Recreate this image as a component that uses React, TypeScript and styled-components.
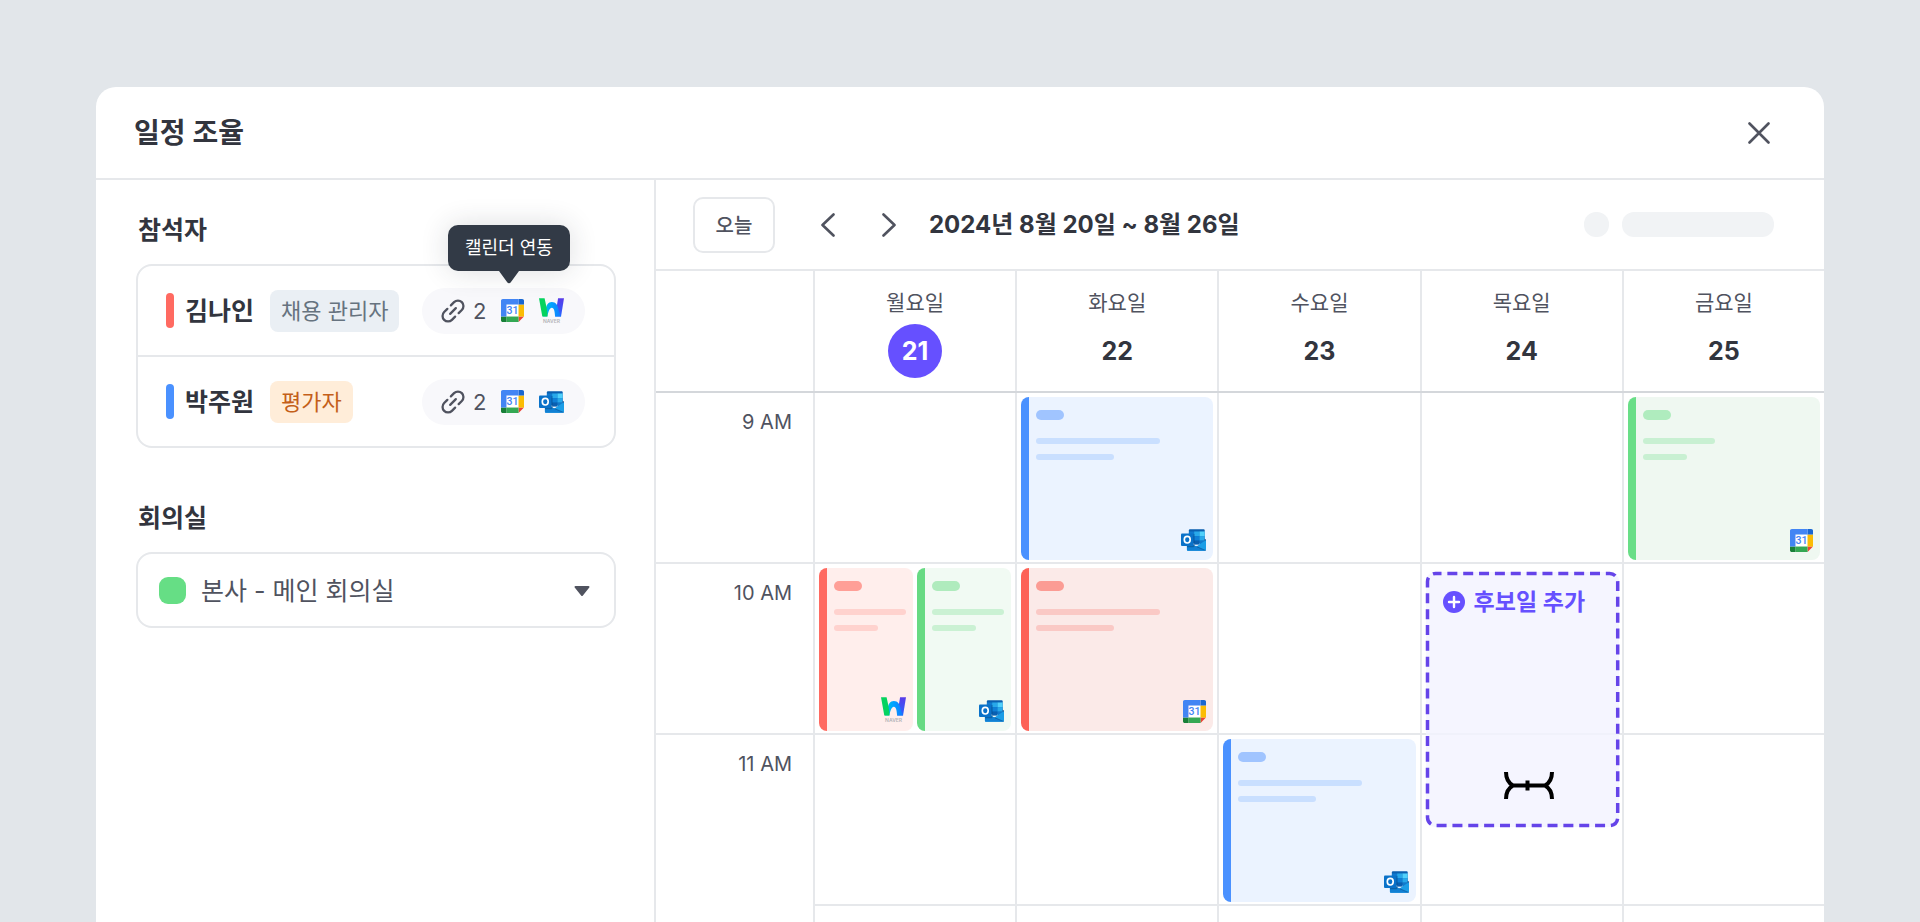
import React from "react";
import styled, { createGlobalStyle } from "styled-components";

const color = {
  page: "#e2e6ea",
  line: "#e6e8eb",
  lineStrong: "#d4d7db",
  ink: "#32353e",
  inkSoft: "#50535f",
  accent: "#6650ff",
  dash: "#6544e9",
};

const GlobalStyle = createGlobalStyle`
  *, *::before, *::after { box-sizing: border-box; }
  body {
    margin: 0;
    background: ${color.page};
    color: ${color.ink};
    font-family: Inter, "Noto Sans CJK KR", sans-serif;
  }
  h1, h2, p, ul { margin: 0; padding: 0; }
  button, select { font: inherit; color: inherit; }
  button { cursor: pointer; }
`;

const Page = styled.div`
  min-height: 100vh;
  padding: 87px 5% 0;
  display: flex;
`;

const Modal = styled.main`
  flex: 1;
  min-width: 0;
  display: flex;
  flex-direction: column;
  background: #fff;
  border-radius: 20px 20px 0 0;
`;

const ModalHeader = styled.header`
  height: 93px;
  padding: 0 50px 0 38px;
  display: flex;
  align-items: center;
  justify-content: space-between;
  border-bottom: 2px solid ${color.line};
`;

const Title = styled.h1`
  font-size: 28px;
  line-height: 40px;
  font-weight: 600;
`;

const IconButton = styled.button`
  padding: 4px;
  border: 0;
  background: none;
  display: flex;
  color: ${color.inkSoft};
`;

const ModalBody = styled.div`
  flex: 1;
  display: flex;
`;

const Sidebar = styled.aside`
  width: 560px;
  flex: none;
  padding: 32px 38px 0 40px;
  border-right: 2px solid ${color.line};
`;

const headingText = `
  display: block;
  padding-left: 2px;
  font-size: 25px;
  line-height: 36px;
  font-weight: 600;
`;

const SectionTitle = styled.h2`
  ${headingText}
`;

const FieldLabel = styled.label`
  ${headingText}
  margin-top: 52px;
`;

const People = styled.ul`
  margin-top: 16px;
  list-style: none;
  border: 2px solid ${color.line};
  border-radius: 16px;
`;

const Person = styled.li`
  height: 89px;
  padding: 0 29px 0 28px;
  display: flex;
  align-items: center;
  & + & {
    height: 91px;
    border-top: 2px solid ${color.line};
  }
`;

const PersonBar = styled.span<{ $fill: string }>`
  width: 8px;
  height: 35px;
  border-radius: 4px;
  background: ${(p) => p.$fill};
`;

const PersonName = styled.span`
  margin: 0 16px 0 11px;
  font-size: 25px;
  line-height: 36px;
  font-weight: 600;
`;

const RoleTag = styled.span<{ $bg: string; $fg: string }>`
  padding: 0 11px;
  border-radius: 8px;
  font-size: 22px;
  line-height: 42px;
  background: ${(p) => p.$bg};
  color: ${(p) => p.$fg};
`;

const LinkedCalendars = styled.div`
  position: relative;
  width: 163px;
  height: 46px;
  margin-left: auto;
  padding: 0 21px 0 19px;
  display: flex;
  align-items: center;
  justify-content: space-between;
  border-radius: 23px;
  background: #f8f8fb;
`;

const LinkCount = styled.span`
  display: flex;
  align-items: center;
  gap: 8px;
  font-size: 22px;
  line-height: 32px;
  color: ${color.inkSoft};
`;

const Tooltip = styled.div`
  position: absolute;
  left: 26px;
  bottom: calc(100% + 17px);
  padding: 0 17px;
  border-radius: 10px;
  background: #323a46;
  color: #fff;
  font-size: 18px;
  line-height: 46px;
  white-space: nowrap;
  box-shadow: 0 0 28px rgba(40, 45, 55, 0.16);
`;

const TooltipArrow = styled.svg`
  position: absolute;
  top: 100%;
  left: calc(50% - 10px);
  display: block;
`;

const SelectBox = styled.div`
  position: relative;
  margin-top: 16px;
`;

const Select = styled.select`
  width: 100%;
  height: 76px;
  padding: 2px 60px 0 63px;
  appearance: none;
  border: 2px solid ${color.line};
  border-radius: 16px;
  background: #fff;
  color: ${color.inkSoft};
  font-size: 25px;
`;

const RoomSwatch = styled.span`
  position: absolute;
  left: 23px;
  top: 25px;
  width: 27px;
  height: 27px;
  border-radius: 9px;
  background: #66de85;
  pointer-events: none;
`;

const SelectArrow = styled.svg`
  position: absolute;
  right: 26px;
  top: 34px;
  pointer-events: none;
`;

const Calendar = styled.section`
  flex: 1;
  min-width: 0;
  display: flex;
  flex-direction: column;
`;

const Toolbar = styled.div`
  height: 91px;
  padding: 0 50px 0 37px;
  display: flex;
  align-items: center;
  border-bottom: 2px solid ${color.line};
`;

const TodayButton = styled.button`
  width: 82px;
  height: 56px;
  padding: 0;
  border: 2px solid ${color.line};
  border-radius: 10px;
  background: #fff;
  font-size: 20px;
  font-weight: 500;
  color: ${color.inkSoft};
`;

const WeekNav = styled.div`
  margin: 0 28px 0 41px;
  display: flex;
  gap: 37px;
`;

const Period = styled.h2`
  font-size: 24px;
  line-height: 36px;
  font-weight: 700;
`;

const Placeholders = styled.div`
  margin-left: auto;
  display: flex;
  gap: 13px;
`;

const Placeholder = styled.span<{ $width: number }>`
  width: ${(p) => p.$width}px;
  height: 25px;
  border-radius: 12px;
  background: #f1f3f5;
`;

const columns = "157px repeat(5, minmax(0, 1fr))";

const WeekHeader = styled.div`
  height: 122px;
  display: grid;
  grid-template-columns: ${columns};
  border-bottom: 2px solid ${color.lineStrong};
`;

const DayHeader = styled.div`
  padding-top: 20px;
  display: flex;
  flex-direction: column;
  align-items: center;
  gap: 9px;
  border-left: 2px solid ${color.line};
`;

const DayName = styled.span`
  font-size: 21px;
  line-height: 24px;
  color: ${color.inkSoft};
`;

const DayNumber = styled.span<{ $today: boolean }>`
  width: 54px;
  border-radius: 27px;
  text-align: center;
  font-size: 25px;
  line-height: 54px;
  font-weight: 700;
  background: ${(p) => (p.$today ? color.accent : "transparent")};
  color: ${(p) => (p.$today ? "#fff" : color.ink)};
`;

const WeekGrid = styled.div`
  flex: 1;
  display: grid;
  grid-template-columns: ${columns};
  grid-template-rows: repeat(3, 171px) minmax(16px, 1fr);
`;

const HourLabel = styled.div<{ $row: number; $ruled: boolean }>`
  grid-column: 1;
  grid-row: ${(p) => p.$row};
  padding: 17px 21px 0 0;
  text-align: right;
  font-size: 20px;
  line-height: 24px;
  color: ${color.inkSoft};
  border-bottom: ${(p) => (p.$ruled ? `2px solid ${color.line}` : "0")};
`;

const Cell = styled.div<{ $col: number; $row: number }>`
  grid-column: ${(p) => p.$col};
  grid-row: ${(p) => p.$row};
  border-left: 2px solid ${color.line};
  border-bottom: ${(p) => (p.$row < 4 ? `2px solid ${color.line}` : "0")};
`;

const Slot = styled.div<{ $col: number; $row: number }>`
  grid-column: ${(p) => p.$col};
  grid-row: ${(p) => p.$row};
  margin: 4px 4px 4px 6px;
  display: flex;
  gap: 4px;
`;

type Tone = "blue" | "red" | "rose" | "green" | "mint";

const tones: Record<Tone, { bar: string; bg: string; pill: string; line: string }> = {
  blue: { bar: "#4a91ff", bg: "#ebf3ff", pill: "#a0c4ff", line: "#c9dfff" },
  red: { bar: "#fd6156", bg: "#fbeae8", pill: "#fb9c94", line: "#fac9c5" },
  rose: { bar: "#ff6a61", bg: "#ffeeec", pill: "#ff9f97", line: "#ffd2ce" },
  green: { bar: "#69de87", bg: "#eff8f1", pill: "#afecbe", line: "#c8f0d2" },
  mint: { bar: "#67da83", bg: "#f1faf3", pill: "#afebbd", line: "#caf1d3" },
};

const EventCard = styled.article<{ $tone: Tone }>`
  flex: 1;
  min-width: 0;
  height: 163px;
  padding: 13px 7px 8px;
  display: flex;
  flex-direction: column;
  border-left: 8px solid ${(p) => tones[p.$tone].bar};
  border-radius: 8px;
  background: ${(p) => tones[p.$tone].bg};
`;

const EventPill = styled.span<{ $tone: Tone }>`
  width: 28px;
  height: 10px;
  margin-bottom: 18px;
  border-radius: 5px;
  background: ${(p) => tones[p.$tone].pill};
`;

const EventLine = styled.span<{ $tone: Tone; $width: number }>`
  width: ${(p) => p.$width}px;
  height: 6px;
  margin-bottom: 10px;
  border-radius: 3px;
  background: ${(p) => tones[p.$tone].line};
`;

const EventSource = styled.span`
  margin-top: auto;
  align-self: flex-end;
  min-height: 23px;
  display: flex;
  align-items: flex-start;
`;

const Candidate = styled.button`
  position: relative;
  grid-column: 5;
  grid-row: 2 / span 2;
  height: 255px;
  margin: 8px 3px 0 6px;
  padding: 14px 0 0 17px;
  display: flex;
  align-items: flex-start;
  gap: 9px;
  border: 0;
  border-radius: 9px;
  background: rgba(243, 242, 255, 0.8);
  color: ${color.accent};
  font-size: 23px;
  line-height: 32px;
  font-weight: 600;
  text-align: left;
`;

const CandidateIcon = styled.svg`
  flex: none;
  margin-top: 5px;
`;

const DashedFrame = styled.svg`
  position: absolute;
  inset: 0;
  width: 100%;
  height: 100%;
  overflow: visible;
  rect {
    width: calc(100% - 3px);
    height: calc(100% - 3px);
  }
`;

const ResizeCursor = styled.svg`
  position: absolute;
  left: 78px;
  bottom: 28px;
`;

const NaverMark = styled.span`
  width: 25px;
  display: flex;
  flex-direction: column;
  align-items: center;
  gap: 2px;
  font-size: 5px;
  line-height: 5px;
  font-weight: 600;
  color: #b4b4b8;
`;

const GoogleCalendarIcon = () => (
  <svg width="23" height="23" viewBox="0 0 200 200" role="img" aria-label="Google Calendar">
    <path d="M152.6 47.4H47.4v105.2h105.2z" fill="#fff" />
    <path d="M152.6 200 200 152.6h-47.4z" fill="#ea4335" />
    <path d="M200 47.4h-47.4v105.2H200z" fill="#fbbc04" />
    <path d="M152.6 152.6H47.4V200h105.2z" fill="#34a853" />
    <path d="M0 152.6v31.6C0 193 7 200 15.8 200h31.6v-47.4z" fill="#188038" />
    <path d="M200 47.4V15.8C200 7 193 0 184.2 0h-31.6v47.4z" fill="#1967d2" />
    <path d="M15.8 0C7 0 0 7 0 15.8v136.800h47.400V47.400h105.200V0z" fill="#4285f4" />
    <text x="100" y="133" textAnchor="middle" fontFamily="Roboto, sans-serif" fontSize="92" fontWeight="500" fill="#4285f4">
      31
    </text>
  </svg>
);

const OutlookIcon = () => (
  <svg width="25" height="22" viewBox="0 0 76 66" role="img" aria-label="Outlook">
    <path d="M27 0h42a3 3 0 0 1 3 3v40H24V3a3 3 0 0 1 3-3z" fill="#0a5fb0" />
    <path d="M24 7h16v14H24z" fill="#1079cf" />
    <path d="M40 7h16v14H40z" fill="#28a8ea" />
    <path d="M56 7h16v14H56z" fill="#50d0fb" />
    <path d="M40 21h16v14H40z" fill="#0f7fd6" />
    <path d="M56 21h16v14H56z" fill="#28a8ea" />
    <path d="M40 35h16v12H40z" fill="#0a5fb0" />
    <path d="M56 35h16v12H56z" fill="#1279cb" />
    <path d="M72 29l4 3v8l-12 6 8-10z" fill="#0a3a7c" />
    <path d="M76 33v30a3 3 0 0 1-3 3H21a3 3 0 0 1-3-3V38l29 15z" fill="#1b9de6" />
    <path d="M18 50l20-1 9 4 27 12.500a3 3 0 0 1-1 .5H21a3 3 0 0 1-3-3z" fill="#1180d3" />
    <path d="M47 53l28 12" stroke="#0a4f96" strokeWidth="2" fill="none" />
    <path d="M38 15h3v36a4 4 0 0 1-4 4H18v-4z" fill="#06467f" opacity=".5" />
    <rect y="13" width="38" height="38" rx="3" fill="#0a72c9" />
    <ellipse cx="19" cy="32" rx="9" ry="10" fill="none" stroke="#fff" strokeWidth="5" />
  </svg>
);

const NaverWorksIcon = () => (
  <NaverMark>
    <svg width="25" height="19" viewBox="0 0 76 57" role="img" aria-label="NAVER WORKS">
      <defs>
        <linearGradient id="arch" x1="0" x2="1" y1="0" y2="0">
          <stop offset="0" stopColor="#00c8d8" />
          <stop offset=".45" stopColor="#00a4ff" />
          <stop offset="1" stopColor="#1478ff" />
        </linearGradient>
        <linearGradient id="right" x1="0" x2="0" y1="0" y2="1">
          <stop offset="0" stopColor="#5a3be8" />
          <stop offset="1" stopColor="#2a64ff" />
        </linearGradient>
      </defs>
      <path d="M58 0h18l-9 56H49z" fill="url(#right)" />
      <path d="M20 38c1-16 8-26 19-26 12 0 19 10 21 26l7 18H49c-1-16-3-27-10-27s-10 11-14 27H12z" fill="url(#arch)" />
      <path d="M0 0h17l5 24c2 12 4 22 4 32H10z" fill="#05d35f" />
    </svg>
    NAVER
  </NaverMark>
);

const LinkIcon = () => (
  <svg width="24" height="24" viewBox="-12 -12 24 24" fill="none" stroke="currentColor" strokeWidth="2.300" strokeLinecap="round" aria-hidden="true">
    <g transform="rotate(-45)">
      <path d="M-2.500 5.500H-7A5.500 5.500 0 0 1-7-5.500H-2.500" />
      <path d="M2.500-5.500H7A5.500 5.500 0 0 1 7 5.500H2.500" />
      <path d="M-4 0H4" />
    </g>
  </svg>
);

type Source = "google" | "outlook" | "naver";

const SourceIcon = ({ source }: { source: Source }) => {
  if (source === "google") return <GoogleCalendarIcon />;
  if (source === "outlook") return <OutlookIcon />;
  return <NaverWorksIcon />;
};

const Chevron = ({ d }: { d: string }) => (
  <svg width="16" height="24" viewBox="0 0 16 24" fill="none" stroke="currentColor" strokeWidth="2.600" strokeLinecap="round" strokeLinejoin="round" aria-hidden="true">
    <path d={d} />
  </svg>
);

type EventData = { tone: Tone; source: Source; lines: [number, number] };

const CalendarEvent = ({ tone, source, lines }: EventData) => (
  <EventCard $tone={tone}>
    <EventPill $tone={tone} />
    {lines.map((width) => (
      <EventLine key={width} $tone={tone} $width={width} />
    ))}
    <EventSource>
      <SourceIcon source={source} />
    </EventSource>
  </EventCard>
);

const days = [
  { name: "월요일", date: 21 },
  { name: "화요일", date: 22 },
  { name: "수요일", date: 23 },
  { name: "목요일", date: 24 },
  { name: "금요일", date: 25 },
];

const hours = ["9 AM", "10 AM", "11 AM"];

const slots: { col: number; row: number; events: EventData[] }[] = [
  { col: 3, row: 1, events: [{ tone: "blue", source: "outlook", lines: [124, 78] }] },
  { col: 6, row: 1, events: [{ tone: "green", source: "google", lines: [72, 44] }] },
  {
    col: 2,
    row: 2,
    events: [
      { tone: "rose", source: "naver", lines: [72, 44] },
      { tone: "mint", source: "outlook", lines: [72, 44] },
    ],
  },
  { col: 3, row: 2, events: [{ tone: "red", source: "google", lines: [124, 78] }] },
  { col: 4, row: 3, events: [{ tone: "blue", source: "outlook", lines: [124, 78] }] },
];

const people: { name: string; role: string; bar: string; bg: string; fg: string; sources: Source[]; tip?: string }[] = [
  { name: "김나인", role: "채용 관리자", bar: "#ff6a61", bg: "#eaeff4", fg: "#66737f", sources: ["google", "naver"], tip: "캘린더 연동" },
  { name: "박주원", role: "평가자", bar: "#4a91ff", bg: "#ffedd9", fg: "#c45f1a", sources: ["google", "outlook"] },
];

export default function App() {
  return (
    <>
      <GlobalStyle />
      <Page>
        <Modal>
          <ModalHeader>
            <Title>일정 조율</Title>
            <IconButton type="button" aria-label="닫기">
              <svg width="22" height="22" viewBox="0 0 22 22" stroke="currentColor" strokeWidth="2.600" strokeLinecap="round" aria-hidden="true">
                <path d="M1.500 1.500l19 19M20.500 1.500l-19 19" />
              </svg>
            </IconButton>
          </ModalHeader>
          <ModalBody>
            <Sidebar>
              <SectionTitle>참석자</SectionTitle>
              <People>
                {people.map((person) => (
                  <Person key={person.name}>
                    <PersonBar $fill={person.bar} />
                    <PersonName>{person.name}</PersonName>
                    <RoleTag $bg={person.bg} $fg={person.fg}>
                      {person.role}
                    </RoleTag>
                    <LinkedCalendars>
                      <LinkCount>
                        <LinkIcon />
                        {person.sources.length}
                      </LinkCount>
                      {person.sources.map((source) => (
                        <SourceIcon key={source} source={source} />
                      ))}
                      {person.tip && (
                        <Tooltip role="tooltip">
                          {person.tip}
                          <TooltipArrow width="20" height="13" viewBox="0 0 20 13" aria-hidden="true">
                            <path d="M0 0h20l-8.200 11.200a2.200 2.200 0 0 1-3.600 0z" fill="#323a46" />
                          </TooltipArrow>
                        </Tooltip>
                      )}
                    </LinkedCalendars>
                  </Person>
                ))}
              </People>
              <FieldLabel htmlFor="room">회의실</FieldLabel>
              <SelectBox>
                <Select id="room" defaultValue="main">
                  <option value="main">본사 - 메인 회의실</option>
                </Select>
                <RoomSwatch />
                <SelectArrow width="16" height="10" viewBox="0 0 16 10" aria-hidden="true">
                  <path d="M1.500 0h13a1 1 0 0 1 .8 1.600L8.900 9.400a1.200 1.200 0 0 1-1.800 0L.7 1.600A1 1 0 0 1 1.500 0z" fill={color.inkSoft} />
                </SelectArrow>
              </SelectBox>
            </Sidebar>
            <Calendar>
              <Toolbar>
                <TodayButton type="button">오늘</TodayButton>
                <WeekNav>
                  <IconButton type="button" aria-label="이전 주">
                    <Chevron d="M13.500 1.500 2.500 12l11 10.500" />
                  </IconButton>
                  <IconButton type="button" aria-label="다음 주">
                    <Chevron d="M2.500 1.500 13.500 12l-11 10.500" />
                  </IconButton>
                </WeekNav>
                <Period>2024년 8월 20일 ~ 8월 26일</Period>
                <Placeholders>
                  <Placeholder $width={25} />
                  <Placeholder $width={152} />
                </Placeholders>
              </Toolbar>
              <WeekHeader>
                <span />
                {days.map((day) => (
                  <DayHeader key={day.date}>
                    <DayName>{day.name}</DayName>
                    <DayNumber $today={day.date === 21}>{day.date}</DayNumber>
                  </DayHeader>
                ))}
              </WeekHeader>
              <WeekGrid>
                {hours.map((hour, i) => (
                  <HourLabel key={hour} $row={i + 1} $ruled={i < 2}>
                    {hour}
                  </HourLabel>
                ))}
                {[1, 2, 3, 4].map((row) =>
                  days.map((day, i) => <Cell key={`${row}-${day.date}`} $col={i + 2} $row={row} />)
                )}
                {slots.map((slot) => (
                  <Slot key={`${slot.col}-${slot.row}`} $col={slot.col} $row={slot.row}>
                    {slot.events.map((event) => (
                      <CalendarEvent key={event.tone} {...event} />
                    ))}
                  </Slot>
                ))}
                <Candidate type="button">
                  <DashedFrame aria-hidden="true">
                    <rect x="1.500" y="1.500" rx="8" fill="none" stroke={color.dash} strokeWidth="3.500" strokeDasharray="10 5.850" strokeDashoffset="4" />
                  </DashedFrame>
                  <CandidateIcon width="22" height="22" viewBox="0 0 22 22" aria-hidden="true">
                    <circle cx="11" cy="11" r="11" fill={color.accent} />
                    <path d="M11 6v10M6 11h10" stroke="#fff" strokeWidth="2.400" strokeLinecap="round" />
                  </CandidateIcon>
                  후보일 추가
                  <ResizeCursor width="50" height="27" viewBox="0 0 50 27" fill="none" stroke="#000" strokeWidth="4" aria-hidden="true">
                    <path d="M2 0c0 7 2.500 11 7 13.500C4.500 16 2 20 2 27M48 0c0 7-2.500 11-7 13.500 4.500 2.500 7 6.500 7 13.500M7 13.500h36M23.500 8.500v10" />
                  </ResizeCursor>
                </Candidate>
              </WeekGrid>
            </Calendar>
          </ModalBody>
        </Modal>
      </Page>
    </>
  );
}
